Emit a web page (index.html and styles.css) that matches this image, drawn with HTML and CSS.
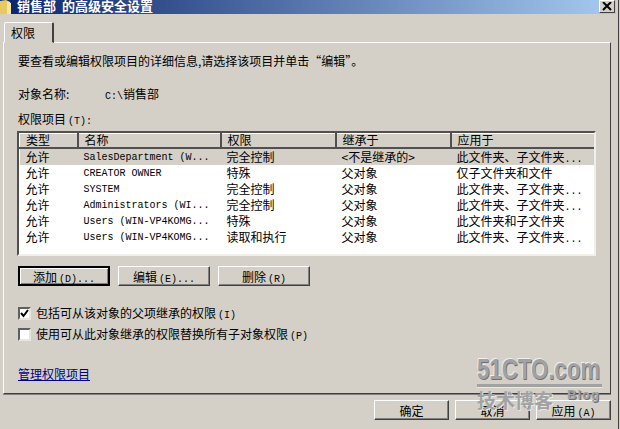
FILE: index.html
```html
<!DOCTYPE html>
<html lang="zh-CN">
<head>
    <meta charset="UTF-8">
    <title>销售部 的高级安全设置</title>
    <link rel="stylesheet" href="styles.css">
</head>
<body>

<div class="window">
    <div class="titlebar">
        <svg class="folder" width="12" height="14" viewBox="0 0 12 14">
            <path d="M0 1 L6 0 L10 2 L10 14 L0 14 Z" fill="#e8c860"/>
            <path d="M7 1 L11 3 L11 14 L7 14 Z" fill="#f4e6a0"/>
        </svg>
        <span class="title">销售部  的高级安全设置</span>
        <button class="close">
            <svg width="10" height="9" viewBox="0 0 10 9"><path d="M1 0 L9 8 M9 0 L1 8" stroke="#000" stroke-width="2"/></svg>
        </button>
    </div>

    <div class="content">
        <div class="tabs"><div class="tab">权限</div></div>

        <div class="panel">
            <p class="intro">要查看或编辑权限项目的详细信息,请选择该项目并单击“编辑”。</p>

            <div class="object">
                <span class="object-label">对象名称:</span>
                <span><span class="lat">C:\</span>销售部</span>
            </div>

            <div class="list-label">权限项目<span class="lat key">(T):</span></div>

            <div class="list">
                <table>
                    <colgroup>
                        <col class="col-type"><col class="col-name"><col class="col-perm"><col class="col-inherit"><col class="col-apply">
                    </colgroup>
                    <thead>
                        <tr><th>类型</th><th>名称</th><th>权限</th><th>继承于</th><th>应用于</th></tr>
                    </thead>
                    <tbody>
                        <tr class="selected"><td>允许</td><td class="name">SalesDepartment (W...</td><td>完全控制</td><td>&lt;不是继承的&gt;</td><td>此文件夹、子文件夹<span class="lat">...</span></td></tr>
                        <tr><td>允许</td><td class="name">CREATOR OWNER</td><td>特殊</td><td>父对象</td><td>仅子文件夹和文件</td></tr>
                        <tr><td>允许</td><td class="name">SYSTEM</td><td>完全控制</td><td>父对象</td><td>此文件夹、子文件夹<span class="lat">...</span></td></tr>
                        <tr><td>允许</td><td class="name">Administrators (WI...</td><td>完全控制</td><td>父对象</td><td>此文件夹、子文件夹<span class="lat">...</span></td></tr>
                        <tr><td>允许</td><td class="name">Users (WIN-VP4KOMG...</td><td>特殊</td><td>父对象</td><td>此文件夹和子文件夹</td></tr>
                        <tr><td>允许</td><td class="name">Users (WIN-VP4KOMG...</td><td>读取和执行</td><td>父对象</td><td>此文件夹、子文件夹<span class="lat">...</span></td></tr>
                    </tbody>
                </table>
            </div>

            <div class="list-buttons">
                <button class="btn default">添加<span class="lat key">(D)...</span></button>
                <button class="btn">编辑<span class="lat key">(E)...</span></button>
                <button class="btn">删除<span class="lat key">(R)</span></button>
            </div>

            <div class="check first">
                <span class="box"><svg width="9" height="9" viewBox="0 0 9 9"><path d="M1 4 L3.5 7 L8 1" fill="none" stroke="#000" stroke-width="2"/></svg></span>
                <span>包括可从该对象的父项继承的权限<span class="lat key">(I)</span></span>
            </div>
            <div class="check">
                <span class="box"></span>
                <span>使用可从此对象继承的权限替换所有子对象权限<span class="lat key">(P)</span></span>
            </div>

            <a class="manage" href="#">管理权限项目</a>
        </div>

        <div class="actions">
            <button class="btn action">确定</button>
            <button class="btn action">取消</button>
            <button class="btn action">应用<span class="lat key">(A)</span></button>
        </div>
    </div>

    <!-- watermark sits over the dialog -->
    <div class="watermark">
        <div class="wm-site">51CTO.com</div>
        <div class="wm-rule"></div>
        <div class="wm-bottom"><span class="wm-cn">技术博客</span><span class="wm-blog">Blog</span></div>
    </div>
</div>

</body>
</html>
```

FILE: styles.css
```css
html, body {
    margin: 0;
    height: 429px;
    overflow: hidden;
}

body {
    font-family: "Noto Sans CJK SC", "Liberation Mono", sans-serif;
    font-size: 12px;
    line-height: 14px;
    color: #000;
    background-color: #d4d0c8;
}

/* mixed latin runs are smaller and must not grow the line box */
.lat {
    font-family: "Liberation Mono", "Noto Sans CJK SC", monospace;
    font-size: 10px;
    line-height: 0;
}

.key {
    margin-left: 2px;
}

.window {
    position: relative;
    width: 619px;
    height: 429px;
    box-sizing: border-box;
    border-right: 1px solid #404040;
}

.titlebar {
    display: flex;
    align-items: flex-start;
    height: 14px;
    width: 616px;
    background: linear-gradient(to right, #0a246a, #a6caf0);
}

.folder {
    flex: none;
}

.title {
    margin-left: 5px;
    color: #fff;
    font-size: 13px;
    font-weight: bold;
    line-height: 12px;
    white-space: pre;
}

.close {
    display: flex;
    align-items: center;
    justify-content: center;
    width: 16px;
    height: 13px;
    margin-left: auto;
    margin-right: 1px;
    padding: 0;
    background-color: #d4d0c8;
    border: 1px solid;
    border-color: #fff #404040 #404040 #fff;
}

.content {
    padding: 8px 0 0 3px;
}

.tabs {
    display: flex;
    height: 20px;
    padding-left: 1px;
}

.tab {
    width: 50px;
    box-sizing: border-box;
    height: 21px;
    padding: 3px 0 0 6px;
    background-color: #d4d0c8;
    border: 1px solid;
    border-color: #fff #404040 transparent #fff;
    border-right-width: 2px;
    border-radius: 2px 2px 0 0;
    position: relative;
    z-index: 1;
}

.panel {
    width: 608px;
    height: 352px;
    box-sizing: border-box;
    padding: 11px 14px 0;
    border: 1px solid;
    border-color: #fff #404040 #404040 #fff;
    box-shadow: 0 1px 0 #808080;
}

.intro {
    margin: 0;
}

.object {
    display: flex;
    margin-top: 19px;
}

.object-label {
    width: 87px;
}

.list-label {
    margin-top: 11px;
}

.list {
    width: 579px;
    height: 125px;
    box-sizing: border-box;
    margin-top: 5px;
    margin-left: -1px;
    background-color: #fff;
    border: 2px solid;
    border-color: #505050 #f0efe9 #f0efe9 #505050;
    overflow: hidden;
}

table {
    table-layout: fixed;
    border-collapse: collapse;
    width: 575px;
}

.col-type { width: 58px; }
.col-name { width: 143px; }
.col-perm { width: 115px; }
.col-inherit { width: 115px; }
.col-apply { width: 144px; }

th {
    height: 14px;
    box-sizing: border-box;
    padding: 0 0 0 6px;
    text-align: left;
    font-weight: normal;
    line-height: 12px;
    background-color: #d4d0c8;
    border-style: solid;
    border-width: 1px 2px 2px 1px;
    border-color: #fff #505050 #505050 #fff;
}

td {
    height: 16px;
    padding: 0 0 0 6px;
    line-height: 14px;
    white-space: nowrap;
    overflow: hidden;
}

td.name {
    height: 14px;
    padding-top: 2px;
    font-family: "Liberation Mono", monospace;
    font-size: 10px;
}

.selected {
    background-color: #d4d0c8;
}

.list-buttons {
    display: flex;
    gap: 8px;
    margin-top: 10px;
}

.btn {
    width: 92px;
    height: 20px;
    padding: 1px 0 0;
    font-family: inherit;
    font-size: 12px;
    line-height: 14px;
    color: #000;
    background-color: #d4d0c8;
    border: 1px solid;
    border-color: #fff #404040 #404040 #fff;
    box-shadow: inset -1px -1px 0 #808080;
}

.btn.default {
    border: 2px solid #000;
    border-color: #000;
    box-shadow: inset 1px 1px 0 #fff, inset -1px -1px 0 #808080;
}

.check {
    display: flex;
    align-items: center;
    gap: 5px;
    margin-top: 7px;
}

.check.first {
    margin-top: 20px;
}

.box {
    display: flex;
    align-items: center;
    justify-content: center;
    width: 13px;
    height: 13px;
    box-sizing: border-box;
    background-color: #fff;
    border: 2px solid;
    border-color: #606060 #e8e6e0 #e8e6e0 #606060;
}

.manage {
    display: block;
    width: fit-content;
    margin-top: 26px;
    color: #000080;
    text-decoration: underline;
}

.actions {
    display: flex;
    justify-content: flex-end;
    gap: 6px;
    width: 608px;
    margin-top: 6px;
}

.btn.action {
    width: 75px;
}

.watermark {
    position: absolute;
    left: 477px;
    top: 354px;
    width: 125px;
    color: #a2a2a2;
}

.wm-site {
    font-family: "Liberation Sans", sans-serif;
    font-size: 30px;
    font-weight: bold;
    line-height: 30px;
    white-space: nowrap;
    transform: scaleX(0.74);
    transform-origin: left center;
    text-shadow: 1px 1px 0 #707070, -1px -1px 0 #f0f0f0;
}

.wm-rule {
    height: 3px;
    background-color: #a2a2a2;
    border-bottom: 1px solid #e8e8e8;
}

.wm-bottom {
    display: flex;
    align-items: flex-start;
    justify-content: space-between;
    margin-top: 1px;
}

.wm-cn {
    font-size: 19px;
    font-weight: bold;
    line-height: 22px;
    text-shadow: 1px 1px 0 #e8e8e8;
}

.wm-blog {
    margin-top: -2px;
    padding-right: 2px;
    font-family: "Liberation Sans", sans-serif;
    font-size: 13px;
    font-weight: bold;
    line-height: 16px;
    letter-spacing: 1px;
    text-shadow: 1px 1px 0 #707070;
}
```
